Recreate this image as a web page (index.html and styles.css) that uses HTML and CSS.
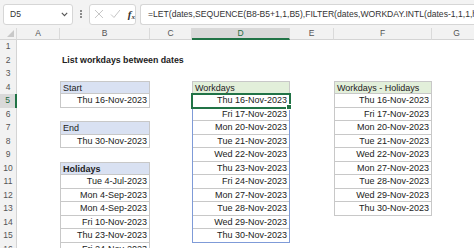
FILE: index.html
```html
<!DOCTYPE html>
<html>
<head>
<meta charset="utf-8">
<link rel="stylesheet" href="styles.css">
</head>
<body>
<div class="app">
  <div class="fbar">
    <div class="namebox">
      <span>D5</span>
      <svg class="chev" width="7" height="5" viewBox="0 0 7 5"><path d="M0.8 0.8 L3.5 3.6 L6.2 0.8" fill="none" stroke="#555" stroke-width="1.1"/></svg>
    </div>
    <div class="dots"><i></i><i></i><i></i></div>
    <div class="fxbox">
      <svg width="10" height="10" viewBox="0 0 10 10"><path d="M1 1 L9 9 M9 1 L1 9" stroke="#c4c4c4" stroke-width="1"/></svg>
      <svg width="11" height="10" viewBox="0 0 11 10"><path d="M1 5.5 L4 8.5 L10 1" fill="none" stroke="#c4c4c4" stroke-width="1"/></svg>
      <span class="fx">f<sub>x</sub></span>
    </div>
    <div class="formula">=LET(dates,SEQUENCE(B8-B5+1,1,B5),FILTER(dates,WORKDAY.INTL(dates-1,1,1,holidays)))</div>
  </div>
  <div class="sheet">
    <div class="col w-rh">
      <div class="hd corner"><svg width="7" height="7" viewBox="0 0 7 7"><path d="M7 0 L7 7 L0 7 Z" fill="#c8c8c8"/></svg></div>
      <div class="rh">1</div><div class="rh">2</div><div class="rh">3</div><div class="rh">4</div>
      <div class="rh sel">5</div><div class="rh">6</div><div class="rh">7</div><div class="rh">8</div>
      <div class="rh">9</div><div class="rh">10</div><div class="rh">11</div><div class="rh">12</div>
      <div class="rh">13</div><div class="rh">14</div><div class="rh">15</div><div class="rh">16</div>
    </div>
    <div class="col w-a">
      <div class="hd">A</div>
    </div>
    <div class="col w-b">
      <div class="hd">B</div>
      <div class="cell"></div>
      <div class="cell title">List workdays between dates</div>
      <div class="cell"></div>
      <div class="cell bx top blue">Start</div>
      <div class="cell bx val">Thu 16-Nov-2023</div>
      <div class="cell"></div>
      <div class="cell bx top blue">End</div>
      <div class="cell bx val">Thu 30-Nov-2023</div>
      <div class="cell"></div>
      <div class="cell bx top blue bold">Holidays</div>
      <div class="cell bx val">Tue 4-Jul-2023</div>
      <div class="cell bx val">Mon 4-Sep-2023</div>
      <div class="cell bx val">Mon 4-Sep-2023</div>
      <div class="cell bx val">Fri 10-Nov-2023</div>
      <div class="cell bx val">Thu 23-Nov-2023</div>
      <div class="cell bx val">Fri 24-Nov-2023</div>
    </div>
    <div class="col w-c">
      <div class="hd">C</div>
    </div>
    <div class="col w-d">
      <div class="hd selc">D</div>
      <div class="cell"></div>
      <div class="cell"></div>
      <div class="cell"></div>
      <div class="cell bx top green">Workdays</div>
      <div class="spill">
        <div class="cell bx val active">Thu 16-Nov-2023</div>
        <div class="cell bx val">Fri 17-Nov-2023</div>
        <div class="cell bx val">Mon 20-Nov-2023</div>
        <div class="cell bx val">Tue 21-Nov-2023</div>
        <div class="cell bx val">Wed 22-Nov-2023</div>
        <div class="cell bx val">Thu 23-Nov-2023</div>
        <div class="cell bx val">Fri 24-Nov-2023</div>
        <div class="cell bx val">Mon 27-Nov-2023</div>
        <div class="cell bx val">Tue 28-Nov-2023</div>
        <div class="cell bx val">Wed 29-Nov-2023</div>
        <div class="cell bx val">Thu 30-Nov-2023</div>
      </div>
    </div>
    <div class="col w-e">
      <div class="hd">E</div>
    </div>
    <div class="col w-f">
      <div class="hd">F</div>
      <div class="cell"></div>
      <div class="cell"></div>
      <div class="cell"></div>
      <div class="cell bx top green">Workdays - Holidays</div>
      <div class="cell bx val">Thu 16-Nov-2023</div>
      <div class="cell bx val">Fri 17-Nov-2023</div>
      <div class="cell bx val">Mon 20-Nov-2023</div>
      <div class="cell bx val">Tue 21-Nov-2023</div>
      <div class="cell bx val">Wed 22-Nov-2023</div>
      <div class="cell bx val">Mon 27-Nov-2023</div>
      <div class="cell bx val">Tue 28-Nov-2023</div>
      <div class="cell bx val">Wed 29-Nov-2023</div>
      <div class="cell bx val">Thu 30-Nov-2023</div>
    </div>
    <div class="col w-g">
      <div class="hd">G</div>
    </div>
  </div>
</div>
</body>
</html>
```

FILE: styles.css
```css
html, body {
  margin: 0;
  padding: 0;
  background: #ffffff;
  overflow: hidden;
}
.app {
  width: 474px;
  height: 248px;
  overflow: hidden;
  font-family: "Liberation Sans", Arial, sans-serif;
  color: #222;
}
.fbar {
  height: 28px;
  box-sizing: border-box;
  background: #f3f3f3;
  display: flex;
  align-items: center;
  padding: 0 0 0 3px;
  white-space: nowrap;
}
.namebox {
  width: 70px;
  height: 21px;
  box-sizing: border-box;
  background: #fff;
  border: 1px solid #d6d6d6;
  border-radius: 3px;
  display: flex;
  align-items: center;
  justify-content: space-between;
  padding: 0 4px 0 6px;
  font-size: 8.5px;
  color: #333;
  flex: none;
}
.dots {
  width: 16px;
  flex: none;
  display: flex;
  flex-direction: column;
  align-items: center;
  gap: 1.5px;
}
.dots i {
  display: block;
  width: 1.6px;
  height: 1.6px;
  background: #777;
  border-radius: 50%;
}
.fxbox {
  width: 47px;
  height: 21px;
  box-sizing: border-box;
  background: #fff;
  border: 1px solid #d6d6d6;
  border-radius: 3px;
  display: flex;
  align-items: center;
  gap: 6px;
  padding: 0 0 0 4px;
  flex: none;
}
.fx {
  font-family: "Liberation Serif", serif;
  font-style: italic;
  font-weight: bold;
  font-size: 11px;
  color: #333;
  margin-left: 1px;
}
.fx sub {
  font-size: 7px;
  vertical-align: -1px;
}
.formula {
  margin-left: 4px;
  height: 21px;
  box-sizing: border-box;
  flex: 1;
  min-width: 0;
  overflow: hidden;
  background: #fff;
  border: 1px solid #d6d6d6;
  border-right: none;
  border-radius: 3px 0 0 3px;
  font-size: 8.6px;
  line-height: 19px;
  padding-left: 7px;
  color: #333;
}
.sheet {
  display: flex;
  align-items: flex-start;
}
.col {
  display: flex;
  flex-direction: column;
  flex: none;
}
.w-rh { width: 17px; }
.w-a { width: 43px; }
.w-b { width: 90px; }
.w-c { width: 42px; }
.w-d { width: 98px; }
.w-e { width: 44px; }
.w-f { width: 98px; }
.w-g { width: 50px; }
.hd {
  height: 12px;
  box-sizing: border-box;
  background: #f2f2f2;
  border-right: 1px solid #dadada;
  border-bottom: 1px solid #d4d4d4;
  font-size: 8.5px;
  line-height: 11px;
  text-align: center;
  color: #555;
}
.corner {
  display: flex;
  align-items: flex-end;
  justify-content: flex-end;
  padding: 0 2px 2px 0;
}
.hd.selc {
  background: #d9d9d9;
  border-bottom: 2px solid #217346;
  color: #1d6b3e;
}
.rh {
  height: 13.5px;
  box-sizing: border-box;
  background: #f2f2f2;
  border-right: 1px solid #d4d4d4;
  font-size: 8.5px;
  line-height: 13.5px;
  text-align: center;
  color: #555;
}
.rh.sel {
  background: #d9d9d9;
  border-right: 2px solid #217346;
  color: #1d6b3e;
}
.cell {
  height: 13.5px;
  box-sizing: border-box;
  font-size: 9px;
  line-height: 13.5px;
  padding: 0 2px;
  white-space: nowrap;
}
.bx {
  border-left: 1px solid #c8c8c8;
  border-right: 1px solid #c8c8c8;
  border-bottom: 1px solid #c8c8c8;
}
.bx.top {
  border-top: 1px solid #c8c8c8;
  line-height: 12px;
}
.val { text-align: right; }
.blue { background: #d9e1f2; }
.green { background: #e2efda; }
.bold, .title { font-weight: bold; }
.title { padding-left: 2px; font-size: 8.8px; }
.spill {
  outline: 1px solid #7f9bd8;
  outline-offset: -1px;
}
.active {
  position: relative;
  outline: 2px solid #217346;
  outline-offset: -1px;
}
.active::after {
  content: "";
  position: absolute;
  right: -3px;
  bottom: -3px;
  width: 4px;
  height: 4px;
  background: #217346;
  border: 1px solid #fff;
}
```
